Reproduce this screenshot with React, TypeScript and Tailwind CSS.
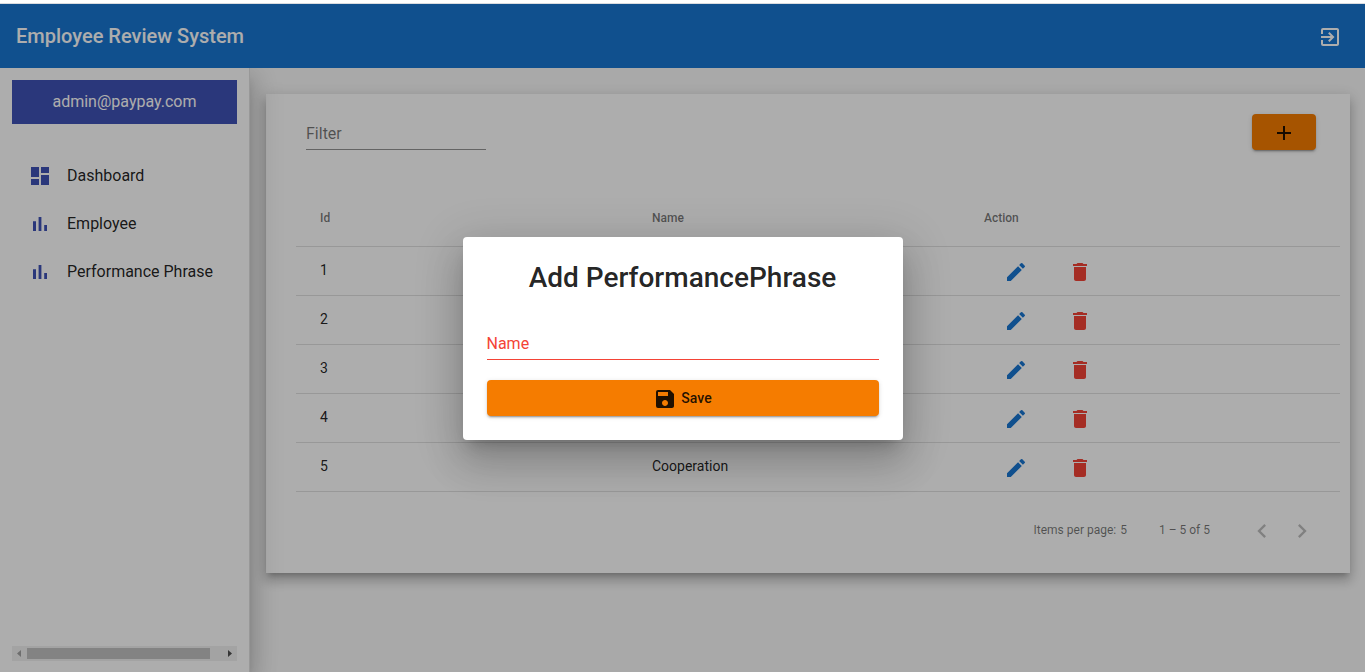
import {
  MdAdd,
  MdChevronLeft,
  MdChevronRight,
  MdDashboard,
  MdDelete,
  MdEdit,
  MdExitToApp,
  MdSave,
} from "react-icons/md";

function BarsIcon({ size, className }: { size: number; className?: string }) {
  return (
    <svg
      width={size}
      height={size}
      viewBox="0 0 24 24"
      fill="currentColor"
      className={className}
      aria-hidden="true"
    >
      <path d="M5 9.200h3V19H5zM10.600 5h2.800v14h-2.800zM16.200 13H19v6h-2.800z" />
    </svg>
  );
}

const navItems = [
  { label: "Dashboard", Icon: MdDashboard },
  { label: "Employee", Icon: BarsIcon },
  { label: "Performance Phrase", Icon: BarsIcon },
];

const phrases = [
  { id: 1, name: "" },
  { id: 2, name: "" },
  { id: 3, name: "" },
  { id: 4, name: "" },
  { id: 5, name: "Cooperation" },
];

const raised =
  "shadow-[0_3px_1px_-2px_rgba(0,0,0,0.2),0_2px_2px_0_rgba(0,0,0,0.14),0_1px_5px_0_rgba(0,0,0,0.12)]";

function Toolbar() {
  return (
    <header className="flex h-16 shrink-0 items-center justify-between bg-[#1976d2] px-4 text-white">
      <h1 className="text-xl font-medium">Employee Review System</h1>
      <button type="button" aria-label="Sign out" className="mr-[7px] pt-0.5">
        <MdExitToApp size={24} />
      </button>
    </header>
  );
}

function SideScrollbar() {
  return (
    <div className="flex h-[15px] items-center bg-[#f1f1f1]" aria-hidden="true">
      <svg width="15" height="15" viewBox="0 0 15 15" className="shrink-0">
        <path d="M9 4v7L5 7.500z" fill="#a3a3a3" />
      </svg>
      <div className="flex grow">
        <div className="h-[11px] w-[94%] bg-[#c1c1c1]" />
      </div>
      <svg width="15" height="15" viewBox="0 0 15 15" className="shrink-0">
        <path d="M6 4v7l4-3.500z" fill="#505050" />
      </svg>
    </div>
  );
}

function Sidebar() {
  return (
    <aside className="z-10 flex w-[250px] shrink-0 flex-col border-r border-black/12 bg-white p-3 pb-[11px] shadow-[0_8px_10px_-5px_rgba(0,0,0,0.2),0_16px_24px_2px_rgba(0,0,0,0.14),0_6px_30px_5px_rgba(0,0,0,0.12)]">
      <div className="flex h-11 items-center justify-center bg-[#3f51b5] text-base text-white">
        admin@paypay.com
      </div>
      <nav className="mt-7 flex grow flex-col">
        {navItems.map(({ label, Icon }) => (
          <a
            key={label}
            href="#"
            className="flex h-12 items-center gap-[15px] px-4 text-base whitespace-nowrap"
          >
            <Icon size={24} className="shrink-0 text-[#3f51b5]" />
            {label}
          </a>
        ))}
      </nav>
      <SideScrollbar />
    </aside>
  );
}

function PhraseTable() {
  return (
    <table className="mx-[30px] mr-2.5 mt-10 block">
      <thead className="block">
        <tr className="flex h-[57px] items-center border-b border-black/12 px-6 text-left text-xs text-black/54">
          <th className="flex-1 font-medium">Id</th>
          <th className="flex-1 font-medium">Name</th>
          <th className="flex-1 font-medium">Action</th>
        </tr>
      </thead>
      <tbody className="block">
        {phrases.map((p) => (
          <tr
            key={p.id}
            className="flex h-[49px] items-center border-b border-black/12 px-6 text-sm"
          >
            <td className="flex-1 pb-0.5">{p.id}</td>
            <td className="flex-1 pb-0.5">{p.name}</td>
            <td className="flex flex-1 pt-0.5">
              <button
                type="button"
                aria-label={`Edit phrase ${p.id}`}
                className="flex h-9 w-16 items-center justify-center text-[#1976d2]"
              >
                <MdEdit size={24} />
              </button>
              <button
                type="button"
                aria-label={`Delete phrase ${p.id}`}
                className="flex h-9 w-16 items-center justify-center text-[#f44336]"
              >
                <MdDelete size={24} />
              </button>
            </td>
          </tr>
        ))}
      </tbody>
    </table>
  );
}

function Paginator() {
  return (
    <div className="mr-7 mt-2.5 flex h-14 items-center justify-end text-xs text-black/54">
      <span>Items per page:</span>
      <span className="ml-1">5</span>
      <span className="mx-8">1 – 5 of 5</span>
      <button
        type="button"
        disabled
        aria-label="Previous page"
        className="flex size-10 items-center justify-center pt-0.5 text-black/26"
      >
        <MdChevronLeft size={28} />
      </button>
      <button
        type="button"
        disabled
        aria-label="Next page"
        className="flex size-10 items-center justify-center pt-0.5 text-black/26"
      >
        <MdChevronRight size={28} />
      </button>
    </div>
  );
}

function AddDialog() {
  return (
    <div className="absolute inset-0 z-20 flex items-center justify-center bg-black/32">
      <form
        role="dialog"
        aria-modal="true"
        aria-labelledby="dialog-title"
        onSubmit={(e) => e.preventDefault()}
        className="flex w-[440px] flex-col rounded bg-white p-6 shadow-[0_11px_15px_-7px_rgba(0,0,0,0.2),0_24px_38px_3px_rgba(0,0,0,0.14),0_9px_46px_8px_rgba(0,0,0,0.12)]"
      >
        <h2 id="dialog-title" className="pt-px text-center text-[28px] leading-8 font-medium">
          Add PerformancePhrase
        </h2>
        <input
          type="text"
          aria-label="Name"
          placeholder="Name"
          className="mt-[34px] h-8 w-full border-b border-[#f44336] text-base outline-none placeholder:text-[#f44336]"
        />
        <button
          type="submit"
          className={`mt-5 flex h-9 items-center justify-center gap-1 rounded bg-[#f57c00] text-sm font-medium ${raised}`}
        >
          <MdSave size={24} className="mt-0.5" />
          Save
        </button>
      </form>
    </div>
  );
}

export default function App() {
  return (
    <div className="flex h-screen flex-col font-[Roboto,sans-serif] text-black/87">
      <div className="h-1 shrink-0 border-b border-[#dadce0] bg-white" />
      <div className="relative flex min-h-0 grow flex-col overflow-hidden">
        <Toolbar />
        <div className="flex min-h-0 grow overflow-hidden bg-[#fafafa]">
          <Sidebar />
          <main className="min-w-0 grow pt-[26px] pr-[15px] pl-4">
            <section className="bg-white pb-[15px] shadow-[0_5px_5px_-3px_rgba(0,0,0,0.2),0_8px_10px_1px_rgba(0,0,0,0.14),0_3px_14px_2px_rgba(0,0,0,0.12)]">
              <div className="flex items-start justify-between pt-5 pr-[34px] pl-10">
                <input
                  type="text"
                  aria-label="Filter"
                  placeholder="Filter"
                  className="mt-[3px] h-[33px] w-[180px] border-b border-black/42 text-base outline-none placeholder:text-black/54"
                />
                <button
                  type="button"
                  aria-label="Add phrase"
                  className={`flex h-9 w-16 items-center justify-center rounded bg-[#f57c00] ${raised}`}
                >
                  <MdAdd size={24} className="mt-0.5" />
                </button>
              </div>
              <PhraseTable />
              <Paginator />
            </section>
          </main>
        </div>
        <AddDialog />
      </div>
    </div>
  );
}
